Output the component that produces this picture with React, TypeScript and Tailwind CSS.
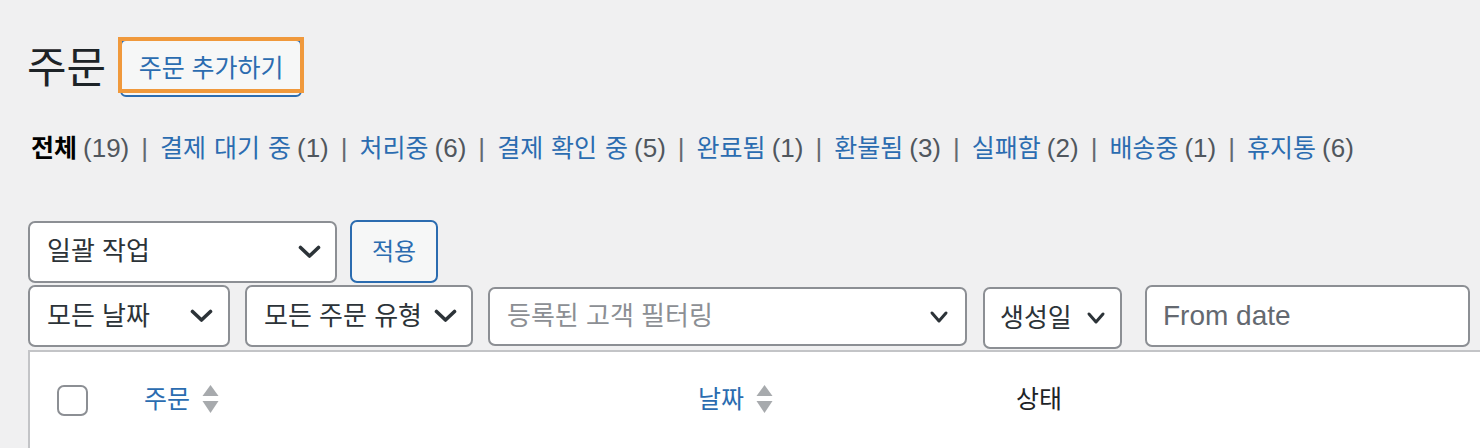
import React from "react";

const BLUE = "text-[#2b6cb0]";

function Chevron({ className = "" }: { className?: string }) {
  return (
    <svg
      className={className}
      width="23"
      height="14"
      viewBox="0 0 23 14"
      fill="none"
    >
      <polyline
        points="2.5,2.5 11.5,11 20.5,2.5"
        stroke="#2c3338"
        strokeWidth="3.6"
        strokeLinecap="round"
        strokeLinejoin="round"
      />
    </svg>
  );
}

function SmallChevron() {
  return (
    <svg width="20" height="14" viewBox="0 0 20 14" fill="none">
      <polyline
        points="3,3 10,11 17,3"
        stroke="#2c3338"
        strokeWidth="3"
        strokeLinecap="round"
        strokeLinejoin="round"
      />
    </svg>
  );
}

function SortArrows() {
  return (
    <svg width="17" height="30" viewBox="0 0 17 30" className="ml-[12px]">
      <polygon points="8.5,0 16.5,11 0.5,11" fill="#a7aaad" />
      <polygon points="0.5,16 16.5,16 8.5,28" fill="#a7aaad" />
    </svg>
  );
}

const items: { label: string; count: number; current?: boolean }[] = [
  { label: "전체", count: 19, current: true },
  { label: "결제 대기 중", count: 1 },
  { label: "처리중", count: 6 },
  { label: "결제 확인 중", count: 5 },
  { label: "완료됨", count: 1 },
  { label: "환불됨", count: 3 },
  { label: "실패함", count: 2 },
  { label: "배송중", count: 1 },
  { label: "휴지통", count: 6 },
];

export default function App() {
  return (
    <div className="w-[1480px] h-[448px] overflow-hidden bg-[#f0f0f1] font-['Liberation_Sans','Noto_Sans_CJK_KR',sans-serif] text-[#2c3338]">
      <div className="pt-[39px] pl-[27px]">
        {/* Title row */}
        <div className="flex items-center h-[58px]">
          <h1 className="text-[43px] leading-none text-[#1d2327] font-normal">
            주문
          </h1>
          <div className="relative ml-[14px] h-[58px] w-[182px] rounded-[6px] border-2 border-[#2b6cb0] bg-[#f6f7f7] flex items-center justify-center">
            <span className={`text-[25px] leading-none ${BLUE}`}>
              주문 추가하기
            </span>
            <span className="absolute -top-[4px] -left-[4px] -right-[4px] bottom-[2px] border-[4px] border-[#f0993c] pointer-events-none" />
          </div>
        </div>

        {/* Status links */}
        <div className="mt-[31px] h-[40px] flex items-center pl-[4px] whitespace-nowrap">
          {items.map((it, i) => (
            <span key={it.label} className="flex items-baseline">
              <span
                className={
                  it.current
                    ? "text-[25px] font-bold text-black"
                    : `text-[25px] ${BLUE} [word-spacing:1px]`
                }
              >
                {it.label}
              </span>
              <span className="ml-[6px] text-[26px] text-[#50575e]">
                ({it.count})
              </span>
              {i < items.length - 1 && (
                <span className="mx-[12px] text-[26px] text-[#646970]">|</span>
              )}
            </span>
          ))}
        </div>

        {/* Bulk actions */}
        <div className="mt-[52px] flex items-center h-[63px] pl-[1px]">
          <div className="h-[62px] w-[309px] rounded-[7px] border-2 border-[#8c8f94] bg-white flex items-center justify-between pl-[17px] pr-[14px]">
            <span className="text-[26px]">일괄 작업</span>
            <Chevron />
          </div>
          <div className="ml-[13px] h-[63px] w-[88px] rounded-[7px] border-2 border-[#2b6cb0] bg-[#f6f7f7] flex items-center justify-center">
            <span className={`text-[24px] ${BLUE}`}>적용</span>
          </div>
        </div>

        {/* Filters */}
        <div className="mt-[2px] flex items-start h-[63px] pl-[1px]">
          <div className="h-[62px] w-[202px] rounded-[7px] border-2 border-[#8c8f94] bg-white flex items-center justify-between pl-[17px] pr-[15px]">
            <span className="text-[26px]">모든 날짜</span>
            <Chevron />
          </div>
          <div className="ml-[15px] h-[62px] w-[228px] rounded-[7px] border-2 border-[#8c8f94] bg-white flex items-center justify-between pl-[17px] pr-[14px]">
            <span className="text-[26px]">모든 주문 유형</span>
            <Chevron />
          </div>
          <div className="ml-[15px] mt-[2px] h-[59px] w-[479px] rounded-[7px] border-2 border-[#8c8f94] bg-white flex items-center justify-between pl-[17px] pr-[16px]">
            <span className="text-[26px] text-[#8c8f94]">등록된 고객 필터링</span>
            <SmallChevron />
          </div>
          <div className="ml-[16px] mt-[2px] h-[62px] w-[139px] rounded-[7px] border-2 border-[#8c8f94] bg-white flex items-center justify-between pl-[15px] pr-[14px]">
            <span className="text-[26px]">생성일</span>
            <SmallChevron />
          </div>
          <div className="ml-[23px] h-[62px] w-[325px] rounded-[7px] border-2 border-[#8c8f94] bg-white flex items-center pl-[16px]">
            <span className="text-[28px] text-[#646970]">From date</span>
          </div>
        </div>

        {/* Table */}
        <div className="mt-[2px] ml-[1px] w-[1500px] h-[120px] bg-white border-t-2 border-l-2 border-[#c3c4c7]">
          <div className="h-[96px] flex items-center pl-[27px]">
            <div className="h-[31px] w-[31px] rounded-[7px] border-2 border-[#8c8f94] bg-white" />
            <div className="ml-[56px] w-[554px] flex items-center">
              <span className={`text-[25px] ${BLUE}`}>주문</span>
              <SortArrows />
            </div>
            <div className="w-[318px] flex items-center">
              <span className={`text-[25px] ${BLUE}`}>날짜</span>
              <SortArrows />
            </div>
            <div className="flex items-center">
              <span className="text-[25px] text-[#1d2327]">상태</span>
            </div>
          </div>
        </div>
      </div>
    </div>
  );
}
